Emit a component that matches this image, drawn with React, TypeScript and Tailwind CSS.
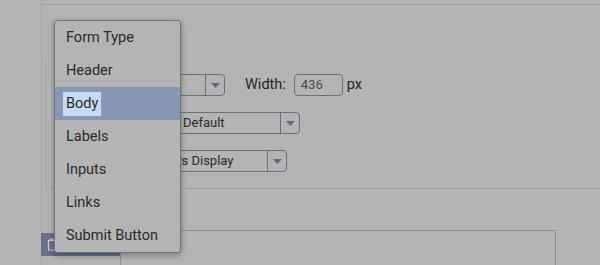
import React from 'react';

const menuItems = ['Form Type', 'Header', 'Body', 'Labels', 'Inputs', 'Links', 'Submit Button'];

const Arrow = () => (
  <svg width="9" height="5" viewBox="0 0 9 5">
    <path d="M0 0 L9 0 L4.5 5 Z" fill="#5d6b78" />
  </svg>
);

const Select = ({ text, width, pad }: { text: string; width: string; pad: string }) => (
  <div className={`flex h-[22px] ${width} items-stretch rounded-[4px] border border-[#5f7383] bg-[#b4b4b4]`}>
    <div className={`flex flex-1 items-center overflow-hidden whitespace-nowrap ${pad} text-[13px] text-[#2a2a2a]`}>{text}</div>
    <div className="flex w-[19px] items-center justify-center border-l border-[#5f7383]">
      <Arrow />
    </div>
  </div>
);

export default function App() {
  return (
    <div className="relative h-[265px] w-[600px] overflow-hidden bg-[#b4b4b4] font-['Roboto',sans-serif]">
      <div className="flex h-full">
        {/* left gutter */}
        <div className="w-[42px] shrink-0 border-r border-[#a2a3aa]" />

        <div className="flex flex-1 flex-col">
          <div className="h-[5px] shrink-0 border-b border-[#9fa0ab]" />
          <div className="h-[55px] shrink-0" />

          {/* settings group */}
          <div className="ml-[3px] flex shrink-0 flex-col gap-[16px] border-b border-l border-[#a0a1a8] pb-[16px] pt-[14px]">
            <div className="flex h-[22px] items-center">
              <div className="w-[90px]" />
              <Select text="" width="w-[89px]" pad="pl-[8px]" />
              <span className="ml-[20px] text-[14.5px] text-[#262626]">Width:</span>
              <div className="ml-[8px] flex h-[22px] w-[49px] items-center rounded-[4px] border border-[#5f7383] pl-[6px] text-[13px] text-[#4a4a4a]">
                436
              </div>
              <span className="ml-[4px] text-[14.5px] text-[#262626]">px</span>
            </div>
            <div className="flex h-[22px] items-center">
              <div className="w-[129px]" />
              <Select text="Default" width="w-[125px]" pad="pl-[7px]" />
            </div>
            <div className="flex h-[22px] items-center">
              <div className="w-[90px]" />
              <Select text="Always Display" width="w-[151px]" pad="pl-[10px]" />
            </div>
          </div>

          {/* lower area */}
          <div className="flex shrink-0 items-start pt-[41px]">
            <div className="-ml-px mt-[3px] flex h-[23px] w-[79px] shrink-0 items-center bg-[#6b6f89] pl-[6px]">
              <svg width="9" height="13" viewBox="0 0 9 13" fill="none" stroke="#c9cbd6" strokeWidth="1.2">
                <path d="M0.5 2.5 H8.5 M3 2.5 V1 H6 V2.5 M1.5 2.5 V12 H7.5 V2.5" />
              </svg>
            </div>
            <div className="h-[40px] w-[436px] shrink-0 border-l border-t border-r border-[#8f8f8f]" />
          </div>
        </div>
      </div>

      {/* open dropdown menu */}
      <div className="absolute left-[54px] top-[20px] w-[127px] rounded-[3px] border border-[#5f7687] bg-[#b4b4b4] shadow-[0_2px_6px_rgba(0,0,0,0.35)]">
        {menuItems.map((item) => (
          <div
            key={item}
            className={`flex h-[33px] items-center pl-[8px] text-[14.5px] text-[#2a2a2a] ${item === 'Body' ? 'bg-[#8797b4]' : ''}`}
          >
            <span className={`px-[3px] leading-[24px] ${item === 'Body' ? 'bg-[#c6d9f7]' : ''}`}>{item}</span>
          </div>
        ))}
      </div>
    </div>
  );
}
